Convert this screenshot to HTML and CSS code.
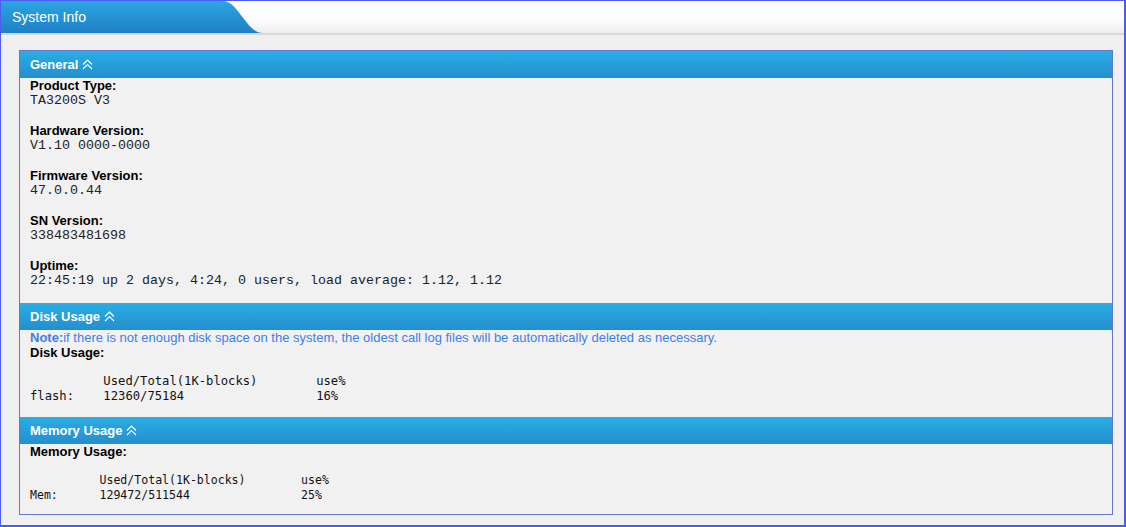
FILE: index.html
```html
<!DOCTYPE html>
<html>
<head>
<meta charset="utf-8">
<link rel="stylesheet" href="styles.css">
</head>
<body>
<div class="frame">
  <div class="tabbar">
    <div class="tab"><span class="tab-title">System Info</span></div>
    <svg class="tab-curve" width="41" height="32" viewBox="0 0 41 32">
      <defs>
        <linearGradient id="tg" x1="0" y1="0" x2="0" y2="1">
          <stop offset="0" stop-color="#2ba6e0"/>
          <stop offset="1" stop-color="#1f80c6"/>
        </linearGradient>
      </defs>
      <path d="M0 0 C10 0 14 8 22 18 C28 26 33 32 41 32 L0 32 Z" fill="url(#tg)"/>
    </svg>
  </div>
  <div class="content">
    <div class="panel">
      <div class="sec-head">General <svg class="chev" width="11" height="11" viewBox="0 0 11 11"><polyline points="1,5.5 5.5,1 10,5.5"/><polyline points="1,10 5.5,5.5 10,10"/></svg></div>
      <div class="sec-body general">
        <div class="lbl">Product Type:</div>
        <div class="val">TA3200S V3</div>
        <div class="gap"></div>
        <div class="lbl">Hardware Version:</div>
        <div class="val">V1.10 0000-0000</div>
        <div class="gap"></div>
        <div class="lbl">Firmware Version:</div>
        <div class="val">47.0.0.44</div>
        <div class="gap"></div>
        <div class="lbl">SN Version:</div>
        <div class="val">338483481698</div>
        <div class="gap"></div>
        <div class="lbl">Uptime:</div>
        <div class="val">22:45:19 up 2 days, 4:24, 0 users, load average: 1.12, 1.12</div>
        <div class="gap"></div>
      </div>
      <div class="sec-head">Disk Usage <svg class="chev" width="11" height="11" viewBox="0 0 11 11"><polyline points="1,5.5 5.5,1 10,5.5"/><polyline points="1,10 5.5,5.5 10,10"/></svg></div>
      <div class="sec-body disk">
        <div class="note"><b>Note:</b>if there is not enough disk space on the system, the oldest call log files will be automatically deleted as necessary.</div>
        <div class="lbl">Disk Usage:</div>
        <pre class="tbl tbl-disk">          Used/Total(1K-blocks)        use%
flash:    12360/75184                  16%</pre>
      </div>
      <div class="sec-head">Memory Usage <svg class="chev" width="11" height="11" viewBox="0 0 11 11"><polyline points="1,5.5 5.5,1 10,5.5"/><polyline points="1,10 5.5,5.5 10,10"/></svg></div>
      <div class="sec-body mem">
        <div class="lbl">Memory Usage:</div>
        <pre class="tbl tbl-mem">          Used/Total(1K-blocks)        use%
Mem:      129472/511544                25%</pre>
      </div>
    </div>
  </div>
</div>
</body>
</html>
```

FILE: styles.css
```css
html, body {
  margin: 0;
  padding: 0;
}
body {
  width: 1126px;
  height: 527px;
  overflow: hidden;
  font-family: "Liberation Sans", Arial, sans-serif;
}
.frame {
  box-sizing: border-box;
  width: 1126px;
  height: 527px;
  border: 1px solid #4b5cf0;
  border-right-width: 2px;
  border-bottom-width: 2px;
  background: #f0f0f0;
  display: flex;
  flex-direction: column;
}
.tabbar {
  height: 32px;
  display: flex;
  align-items: stretch;
  background: linear-gradient(#ffffff 0%, #fdfdfd 60%, #ececec 100%);
  border-bottom: 2px solid #d8d8d8;
  flex: none;
}
.tab {
  width: 221px;
  background: linear-gradient(#2ba6e0, #1f80c6);
  display: flex;
  align-items: center;
}
.tab-title {
  color: #fff;
  font-size: 14px;
  padding-left: 11px;
  padding-bottom: 1px;
}
.tab-curve {
  display: block;
  flex: none;
}
.content {
  flex: 1;
  padding: 15px 11px 10px 18px;
  display: flex;
}
.panel {
  flex: 1;
  border: 1px solid #6676c8;
  background: #f1f1f1;
  padding-bottom: 10px;
}
.sec-head {
  height: 27px;
  box-sizing: border-box;
  padding-left: 10px;
  display: flex;
  align-items: center;
  gap: 4px;
  color: #fff;
  font-weight: bold;
  font-size: 13px;
  background: linear-gradient(#29ade4, #258fce);
}
.chev {
  display: block;
  margin-top: -1px;
}
.chev polyline {
  fill: none;
  stroke: #fff;
  stroke-width: 1.2;
}
.sec-body {
  padding-left: 10px;
}
.lbl {
  font-weight: bold;
  font-size: 13px;
  line-height: 15px;
  color: #000;
}
.val {
  font-family: "Liberation Mono", "Courier New", monospace;
  font-size: 13.33px;
  line-height: 15px;
  color: #222;
}
.gap {
  height: 15px;
}
.note {
  font-size: 13px;
  line-height: 15px;
  color: #3d80ea;
}
.tbl {
  margin: 0;
  padding-top: 14px;
  font-family: "DejaVu Sans Mono", monospace;
  line-height: 15px;
  color: #111;
}
.tbl-disk {
  font-size: 12.2px;
  margin-bottom: 13px;
}
.tbl-mem {
  font-size: 11.55px;
}
```
